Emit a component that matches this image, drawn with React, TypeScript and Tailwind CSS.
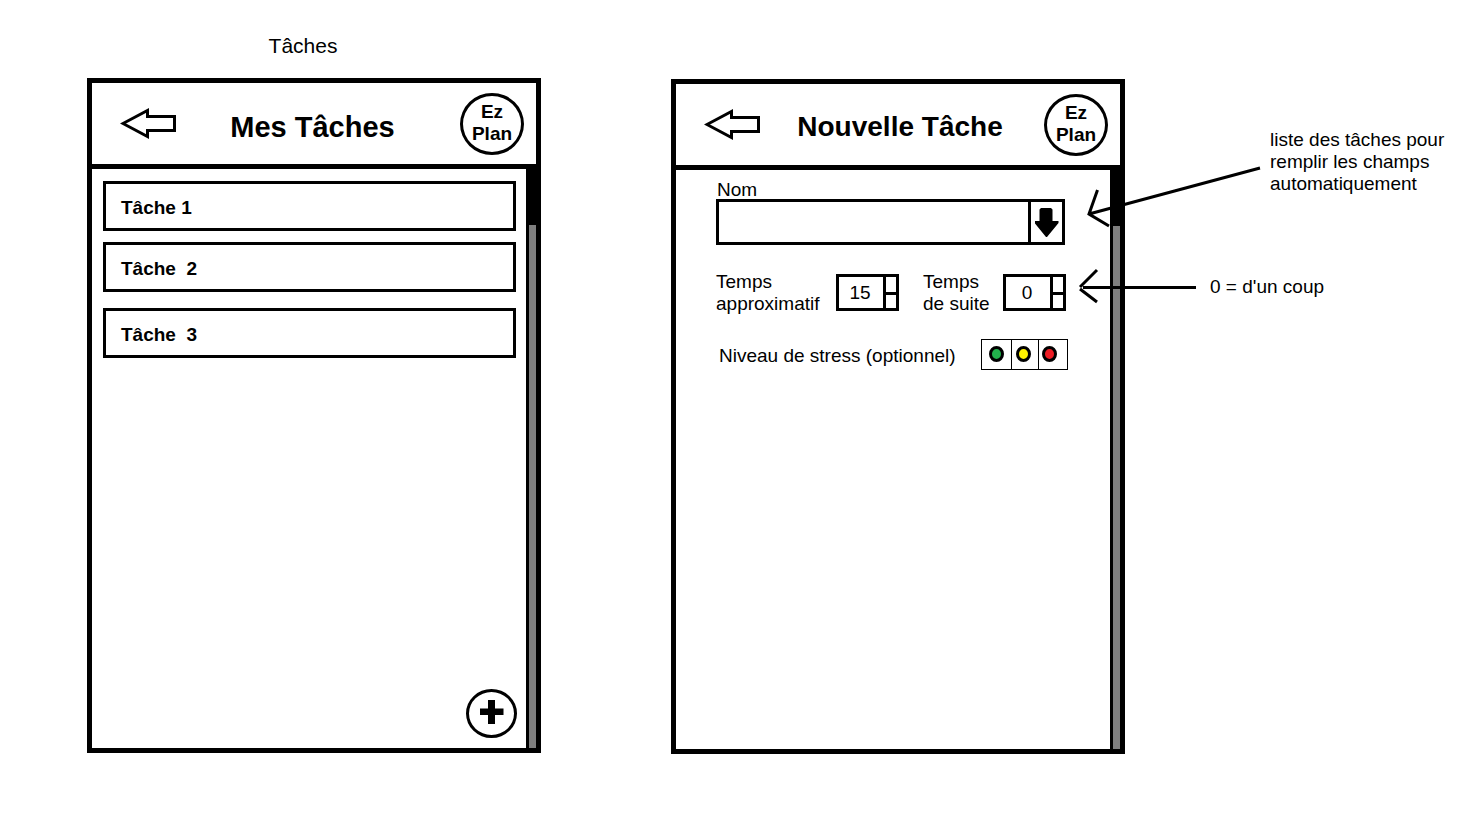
import { useState, type ReactNode } from "react";

function BackButton() {
  return (
    <button type="button" aria-label="Retour" className="shrink-0">
      <svg width="56" height="32" viewBox="0 0 56 32" fill="none" stroke="black" strokeWidth="3" className="block">
        <polygon points="3,15.5 27.5,2.5 27.5,8.5 54.5,8.5 54.5,22.5 27.5,22.5 27.5,28.5" />
      </svg>
    </button>
  );
}

function Logo() {
  return (
    <div className="flex h-[62px] w-16 shrink-0 flex-col items-center rounded-[50%] border-3 border-black pt-[5px] text-[19px] leading-[22px] font-bold">
      <span>Ez</span>
      <span>Plan</span>
    </div>
  );
}

function Screen({ title, titleClass, children }: { title: string; titleClass: string; children: ReactNode }) {
  return (
    <section className="flex min-h-[675px] w-full flex-col border-5 border-black bg-white">
      <header className="flex h-[86px] shrink-0 items-center border-b-5 border-black pr-3 pl-7">
        <BackButton />
        <h2 className={`flex-1 text-center leading-8 font-bold ${titleClass}`}>{title}</h2>
        <Logo />
      </header>
      <div className="flex flex-1">
        <div className="flex min-w-0 flex-1 flex-col">{children}</div>
        <div className="w-[10px] shrink-0 border-l-3 border-black bg-[#7f7f7f]">
          <div className="h-14 bg-black" />
        </div>
      </div>
    </section>
  );
}

const tasks = ["Tâche 1", "Tâche  2", "Tâche  3"];

function TaskList() {
  return (
    <Screen title="Mes Tâches" titleClass="pt-[6px] pr-[11px] text-[29px]">
      <ul className="flex flex-col gap-[11px] pt-3 pr-[10px] pl-[11px]">
        {tasks.map((task) => (
          <li key={task} className="last:mt-[5px]">
            <button
              type="button"
              className="block h-[50px] w-full border-3 border-black px-[15px] pt-1 text-left text-[19px] leading-[22px] font-bold whitespace-pre"
            >
              {task}
            </button>
          </li>
        ))}
      </ul>
      <div className="mt-auto flex justify-end pr-[9px] pb-[10px]">
        <button
          type="button"
          aria-label="Ajouter une tâche"
          className="flex h-[49px] w-[51px] items-center justify-center rounded-[50%] border-3 border-black"
        >
          <svg width="24" height="24" viewBox="0 0 24 24" className="mb-1">
            <path d="M8 0h7v8.500h8.500v6.500H15v9H8v-9H0V8.500h8z" />
          </svg>
        </button>
      </div>
    </Screen>
  );
}

function Stepper({ id, initial }: { id: string; initial: number }) {
  const [value, setValue] = useState(initial);
  return (
    <div className="mt-[3px] flex h-[37px] w-[63px] shrink-0 border-3 border-black">
      <input
        id={id}
        inputMode="numeric"
        value={value}
        onChange={(e) => setValue(Number(e.target.value) || 0)}
        className="min-w-0 flex-1 pr-[2px] text-center text-[19px] leading-[22px] outline-none"
      />
      <div className="flex w-[13px] flex-col border-l-3 border-black">
        <button type="button" aria-label="Augmenter" className="flex-1 border-b-3 border-black" onClick={() => setValue(value + 1)} />
        <button type="button" aria-label="Diminuer" className="h-[13px]" onClick={() => setValue(Math.max(0, value - 1))} />
      </div>
    </div>
  );
}

const levels = [
  { name: "Faible", cell: "w-[30px] border-r", dot: "bg-[#22b14c]" },
  { name: "Moyen", cell: "w-[27px] border-r pr-[3px]", dot: "bg-[#fff200]" },
  { name: "Élevé", cell: "flex-1 pr-[7px]", dot: "bg-[#ed1c24]" },
];

function NewTask() {
  return (
    <Screen title="Nouvelle Tâche" titleClass="pt-1 pr-1 text-[28px]">
      <form className="flex flex-col pt-2 pr-[45px] pl-10 text-[19px] leading-[22px]">
        <label htmlFor="nom" className="h-[21px] pl-px leading-[23px]">
          Nom
        </label>
        <div className="flex h-[46px] border-3 border-black">
          <input id="nom" type="text" className="min-w-0 flex-1 px-3 outline-none" />
          <button type="button" aria-label="Choisir une tâche" className="flex w-[34px] items-center justify-center border-l-3 border-black">
            <svg width="24" height="30" viewBox="0 0 24 30" className="block">
              <path d="M6 1h10l1.500 1.500v11.500h6v2L12 30h-1L-0.500 16v-2H4.500V2.500z" />
            </svg>
          </button>
        </div>

        <div className="mt-[26px] flex items-start">
          <label htmlFor="approx" className="w-[120px] shrink-0">
            Temps
            <br />
            approximatif
          </label>
          <Stepper id="approx" initial={15} />
          <label htmlFor="suite" className="ml-6 w-20 shrink-0">
            Temps
            <br />
            de suite
          </label>
          <Stepper id="suite" initial={0} />
        </div>

        <fieldset className="mt-6 flex items-center pl-[3px]" aria-labelledby="stress">
          <span id="stress" className="w-[262px] shrink-0 pt-[2px] whitespace-nowrap">
            Niveau de stress (optionnel)
          </span>
          <div className="flex h-[31px] w-[87px] shrink-0 border border-black">
            {levels.map((level) => (
              <label key={level.name} className={`flex items-center justify-center border-black pb-px ${level.cell}`}>
                <input
                  type="radio"
                  name="stress"
                  aria-label={level.name}
                  className={`block h-4 w-[15px] shrink-0 appearance-none rounded-[50%] border-3 border-black ${level.dot}`}
                />
              </label>
            ))}
          </div>
        </fieldset>
      </form>
    </Screen>
  );
}

function Callouts() {
  return (
    <svg
      width="190"
      height="150"
      viewBox="0 0 190 150"
      fill="none"
      stroke="black"
      strokeWidth="3"
      className="pointer-events-none absolute top-[159px] left-[404px]"
    >
      <path d="M185 9L14 55M22.500 31L14 55L34 67" />
      <path d="M8 128.500H121M22 111L5 128M5 130L22 143" />
    </svg>
  );
}

export default function App() {
  return (
    <main className="flex min-h-screen items-start bg-white pl-[87px] font-['Liberation_Sans',Arial,sans-serif] text-black">
      <div className="w-full max-w-[454px] pt-8">
        <h1 className="mb-[18px] pr-[22px] text-center text-[21px] leading-7">Tâches</h1>
        <TaskList />
      </div>
      <div className="relative ml-[130px] w-full max-w-[454px] pt-[79px]">
        <NewTask />
        <Callouts />
      </div>
      <aside className="shrink-0 pt-[129px] pr-4 text-[19px] leading-[22px] whitespace-nowrap">
        <p className="pl-[145px]">
          liste des tâches pour
          <br />
          remplir les champs
          <br />
          automatiquement
        </p>
        <p className="mt-[81px] pl-[85px]">0 = d'un coup</p>
      </aside>
    </main>
  );
}
